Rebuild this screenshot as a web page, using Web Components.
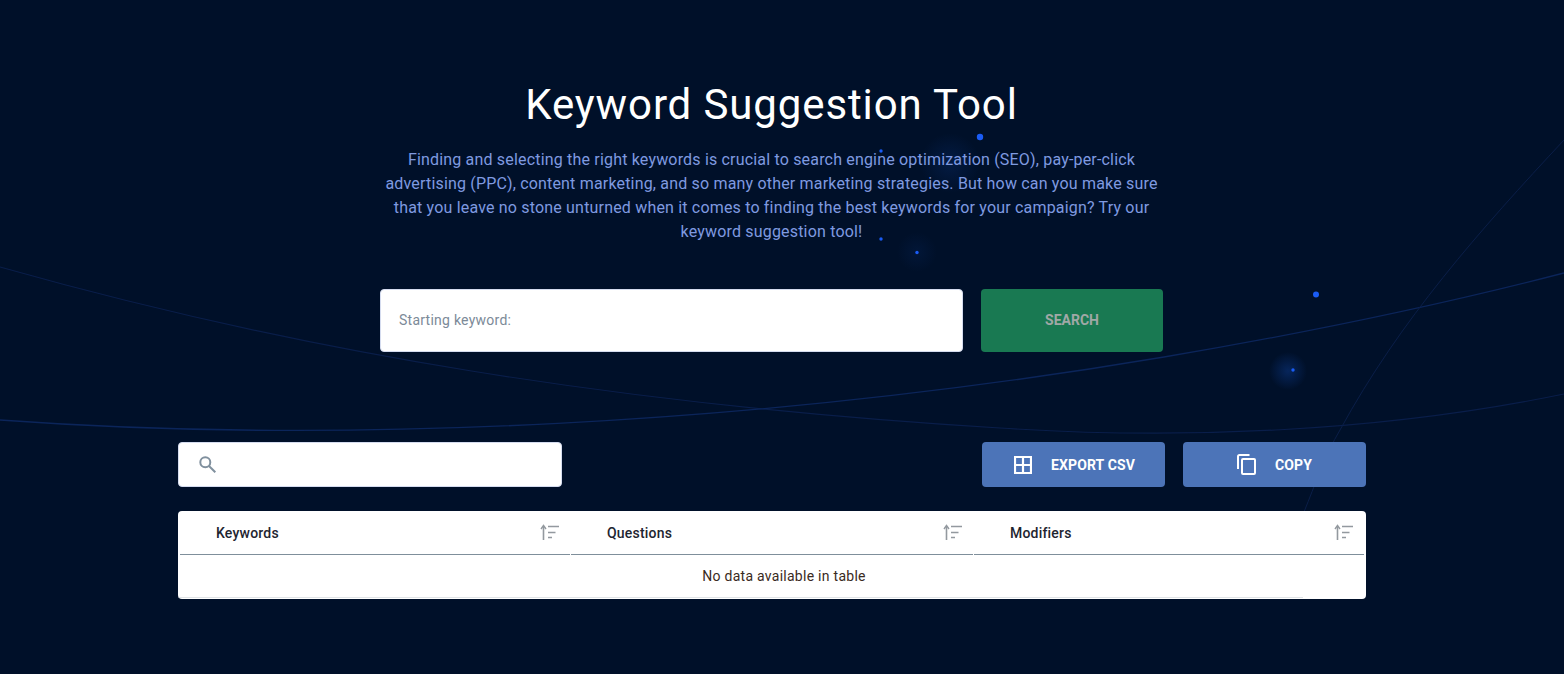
<!DOCTYPE html>
<html lang="en">
<head>
<meta charset="utf-8">
<title>Keyword Suggestion Tool</title>
<style>
  html, body { margin: 0; height: 100%; background: #001029; }
  body { font-family: Roboto, "Liberation Sans", sans-serif; overflow: hidden; }
</style>
</head>
<body>
<kw-backdrop></kw-backdrop>
<kw-page>
  <kw-hero>
    <span slot="title">Keyword Suggestion Tool</span>
    Finding and selecting the right keywords is crucial to search engine optimization (SEO), pay-per-click advertising (PPC), content marketing, and so many other marketing strategies. But how can you make sure that you leave no stone unturned when it comes to finding the best keywords for your campaign? Try our keyword suggestion tool!
  </kw-hero>
  <kw-search placeholder="Starting keyword:" action="SEARCH"></kw-search>
  <kw-toolbar>
    <kw-action icon="grid" label="EXPORT CSV"></kw-action>
    <kw-action icon="copy" label="COPY"></kw-action>
  </kw-toolbar>
  <kw-table empty="No data available in table">
    <kw-th>Keywords</kw-th>
    <kw-th>Questions</kw-th>
    <kw-th>Modifiers</kw-th>
  </kw-table>
</kw-page>

<script>
// ---- Background: orbit lines and dots ----
class KwBackdrop extends HTMLElement {
  constructor() {
    super();
    this.attachShadow({ mode: 'open' }).innerHTML = `
      <style>
        :host { position: absolute; inset: 0; display: block; z-index: 0; }
        svg { display: block; }
      </style>
      <svg width="1564" height="674" viewBox="0 0 1564 674" fill="none">
        <defs>
          <radialGradient id="glow">
            <stop offset="0" stop-color="#0d3a8c" stop-opacity=".6"/>
            <stop offset="1" stop-color="#0d3a8c" stop-opacity="0"/>
          </radialGradient>
        </defs>
        <path d="M0 267C300 352 620 405 1000 428C1180 440 1380 432 1564 394" stroke="#091e4a" stroke-width="1.2"/>
        <path d="M0 420C340 445 760 425 1164 357C1300 334 1440 305 1564 273" stroke="#0b255a" stroke-width="1.3"/>
        <path d="M1564 140C1480 230 1400 320 1340 430C1325 455 1315 485 1304 512" stroke="#0a1e48" stroke-width="1"/>
        <circle cx="950" cy="163" r="30" fill="url(#glow)" opacity=".45"/>
        <circle cx="917" cy="252" r="20" fill="url(#glow)" opacity=".25"/>
        <circle cx="1288" cy="371" r="19" fill="url(#glow)" opacity=".85"/>
        <circle cx="980" cy="137" r="3.2" fill="#1a5cf5"/>
        <circle cx="881" cy="151" r="1.7" fill="#1a5cf5"/>
        <circle cx="881" cy="239" r="1.7" fill="#1a5cf5"/>
        <circle cx="917" cy="252.500" r="1.7" fill="#1a5cf5"/>
        <circle cx="1316" cy="294.500" r="3" fill="#1a5cf5"/>
        <circle cx="1293" cy="370" r="1.700" fill="#1a5cf5"/>
      </svg>`;
  }
}
customElements.define('kw-backdrop', KwBackdrop);

// ---- Page column ----
class KwPage extends HTMLElement {
  constructor() {
    super();
    this.attachShadow({ mode: 'open' }).innerHTML = `
      <style>
        :host {
          position: relative;
          z-index: 1;
          display: flex;
          flex-direction: column;
          align-items: center;
          width: 1544px;
          padding-top: 80px;
          box-sizing: border-box;
        }
      </style>
      <slot></slot>`;
  }
}
customElements.define('kw-page', KwPage);

// ---- Heading and intro ----
class KwHero extends HTMLElement {
  constructor() {
    super();
    this.attachShadow({ mode: 'open' }).innerHTML = `
      <style>
        :host { display: block; width: 783px; margin-right: 1px; text-align: center; }
        h1 {
          margin: 0 0 18px;
          font: 400 42px/50px Roboto, "Liberation Sans", sans-serif;
          letter-spacing: .88px;
          color: #fff;
        }
        p {
          margin: 0;
          font: 400 16px/24px Roboto, "Liberation Sans", sans-serif;
          letter-spacing: .18px;
          color: #7f9ae0;
        }
      </style>
      <h1><slot name="title"></slot></h1>
      <p><slot></slot></p>`;
  }
}
customElements.define('kw-hero', KwHero);

// ---- Starting keyword form ----
class KwSearch extends HTMLElement {
  constructor() {
    super();
    this.attachShadow({ mode: 'open' }).innerHTML = `
      <style>
        :host { display: flex; gap: 18px; margin: 45px 1px 0 0; height: 63px; }
        .field {
          width: 583px;
          box-sizing: border-box;
          padding: 0 0 2px 18px;
          display: flex;
          align-items: center;
          background: #fff;
          border: 1px solid #d5dcef;
          border-radius: 4px;
          font-size: 14px;
          letter-spacing: .25px;
          color: #7c8a98;
        }
        button {
          width: 182px;
          border: 0;
          padding: 0 0 2px;
          border-radius: 4px;
          background: #197952;
          color: #a0a8a6;
          font: 700 14px Roboto, "Liberation Sans", sans-serif;
        }
      </style>
      <div class="field"></div>
      <button type="button"></button>`;
    this.shadowRoot.querySelector('.field').textContent = this.getAttribute('placeholder');
    this.shadowRoot.querySelector('button').textContent = this.getAttribute('action');
  }
}
customElements.define('kw-search', KwSearch);

// ---- Filter box plus export buttons ----
class KwToolbar extends HTMLElement {
  constructor() {
    super();
    this.attachShadow({ mode: 'open' }).innerHTML = `
      <style>
        :host {
          display: flex;
          justify-content: space-between;
          width: 1188px;
          height: 45px;
          margin-top: 90px;
        }
        .filter {
          width: 384px;
          box-sizing: border-box;
          padding-left: 20px;
          display: flex;
          align-items: center;
          background: #fff;
          border: 1px solid #d5dcef;
          border-radius: 4px;
        }
        .actions { display: flex; gap: 18px; }
        svg { display: block; }
      </style>
      <div class="filter">
        <svg width="17" height="17" viewBox="0 0 17 17" fill="none" stroke="#80909e" stroke-width="2">
          <circle cx="6.300" cy="6.300" r="5"/>
          <path d="M10 10L16.300 16.300"/>
        </svg>
      </div>
      <div class="actions"><slot></slot></div>`;
  }
}
customElements.define('kw-toolbar', KwToolbar);

const ACTION_ICONS = {
  grid: `<svg width="18" height="18" viewBox="0 0 18 18" fill="none" stroke="#fff" stroke-width="2.200">
    <path d="M1 1H17V17H1ZM9 1V17M1 9H17"/></svg>`,
  copy: `<svg width="19" height="21" viewBox="0 0 19 21" fill="none" stroke="#fff" stroke-width="2">
    <path d="M12.500 1H2.500Q1 1 1 2.500V15"/><rect x="5" y="5" width="13" height="15" rx="1"/></svg>`,
};

class KwAction extends HTMLElement {
  constructor() {
    super();
    const icon = this.getAttribute('icon');
    this.attachShadow({ mode: 'open' }).innerHTML = `
      <style>
        :host {
          display: flex;
          align-items: center;
          width: 183px;
          box-sizing: border-box;
          padding-left: ${icon === 'grid' ? 32 : 54}px;
          background: #4c74b8;
          border-radius: 4px;
          color: #fff;
          font: 700 14px Roboto, "Liberation Sans", sans-serif;
          letter-spacing: .12px;
        }
        span { margin-left: 19px; }
        svg { display: block; }
      </style>
      ${ACTION_ICONS[icon]}
      <span></span>`;
    this.shadowRoot.querySelector('span').textContent = this.getAttribute('label');
  }
}
customElements.define('kw-action', KwAction);

// ---- Results table ----
class KwTable extends HTMLElement {
  constructor() {
    super();
    this.attachShadow({ mode: 'open' }).innerHTML = `
      <style>
        :host {
          display: block;
          width: 1188px;
          height: 88px;
          margin-top: 24px;
          box-sizing: border-box;
          padding: 0 2px;
          background: #fff;
          border-radius: 4px;
          overflow: hidden;
          font-family: Roboto, "Liberation Sans", sans-serif;
        }
        .head { display: grid; grid-template-columns: 390px 402px 390px; gap: 1px; }
        .empty {
          height: 42px;
          display: flex;
          align-items: center;
          justify-content: center;
          padding-left: 24px;
          font-size: 14px;
          letter-spacing: .27px;
          color: #3a2a22;
        }
        .rule { width: 1125px; height: 1px; margin-left: -2px; background: #dfe3e6; }
      </style>
      <div class="head"><slot></slot></div>
      <div class="empty"></div>
      <div class="rule"></div>`;
    this.shadowRoot.querySelector('.empty').textContent = this.getAttribute('empty');
  }
}
customElements.define('kw-table', KwTable);

class KwTh extends HTMLElement {
  constructor() {
    super();
    this.attachShadow({ mode: 'open' }).innerHTML = `
      <style>
        :host {
          display: flex;
          align-items: center;
          justify-content: space-between;
          height: 44px;
          box-sizing: border-box;
          padding: 1px 11px 0 36px;
          border-bottom: 1px solid #7f8f9b;
          font-size: 14px;
          font-weight: 500;
          letter-spacing: .2px;
          color: #1e2530;
        }
        svg { display: block; margin-bottom: 2px; }
      </style>
      <slot></slot>
      <svg width="19" height="16" viewBox="0 0 19 16" fill="none" stroke="#93999f" stroke-width="1.600">
        <path d="M3.500 16V2"/><path d="M1 5L3.500 1.500L6 5" stroke-width="1.400"/>
        <path d="M8 2.500H19M8 8.500H15.500M8 13.500H12"/>
      </svg>`;
  }
}
customElements.define('kw-th', KwTh);
</script>
</body>
</html>
